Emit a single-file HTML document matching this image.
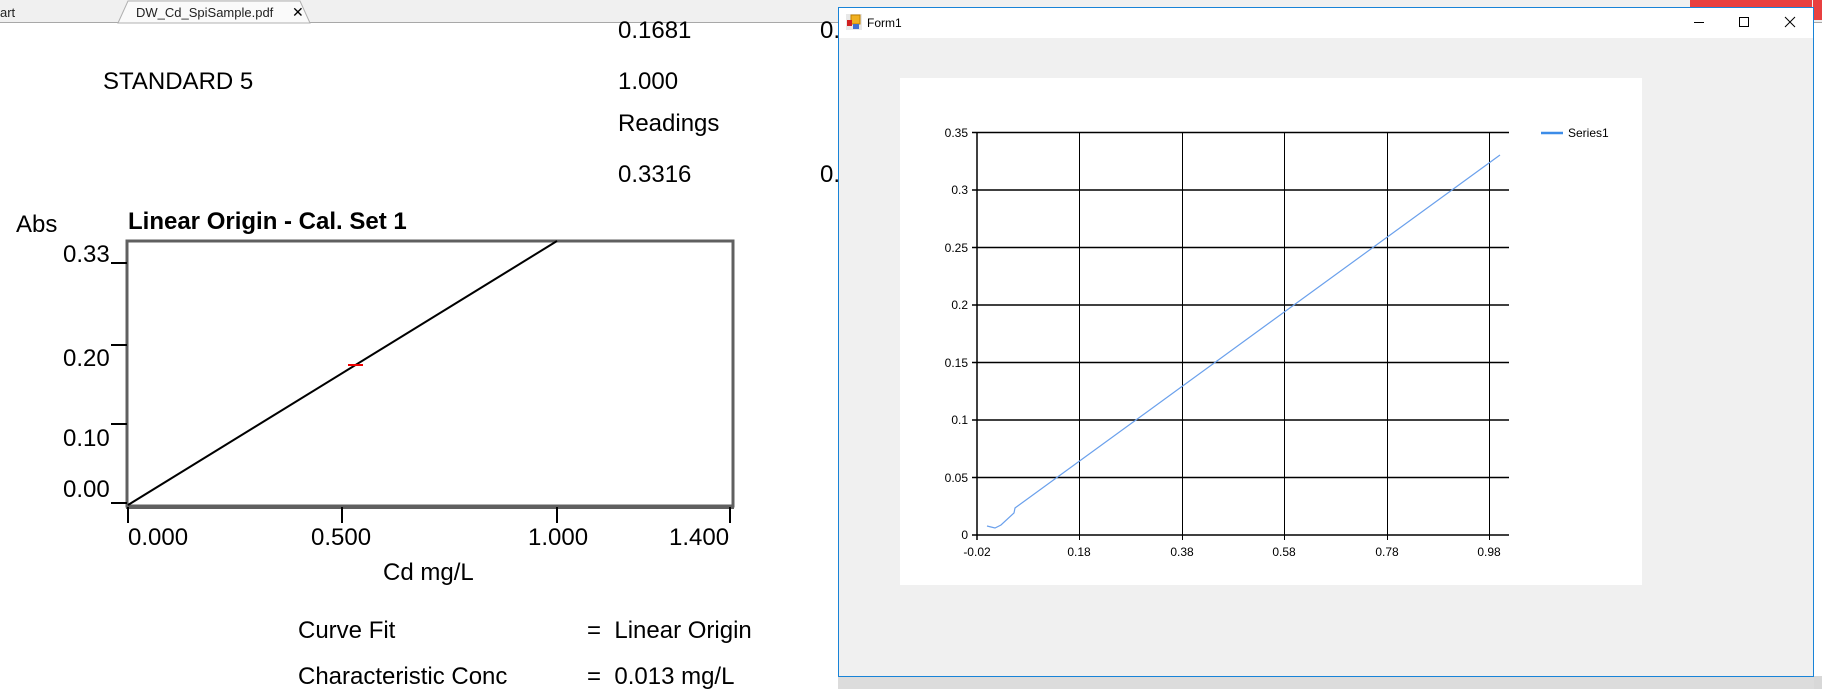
<!DOCTYPE html>
<html><head><meta charset="utf-8"><style>
html,body{margin:0;padding:0;width:1822px;height:689px;overflow:hidden;background:#fff;font-family:"Liberation Sans",sans-serif;}
.a{position:absolute;white-space:nowrap;line-height:1;}
.p{font-size:24px;color:#000;}
</style></head><body>
<!-- tab bar -->
<div class="a" style="left:0;top:0;width:1822px;height:22px;background:#f0f0f0;border-bottom:1px solid #a8a8a8;"></div>
<svg class="a" style="left:0;top:0" width="340" height="24"><polygon points="118,23 128,1 300,1 310,23" fill="#fafafa" stroke="#b0b0b0"/></svg>
<div class="a" style="left:0;top:6px;font-size:13px;color:#222;">art</div>
<div class="a" style="left:136px;top:6px;font-size:13px;color:#222;">DW_Cd_SpiSample.pdf</div>
<div class="a" style="left:292px;top:5px;font-size:14px;color:#000;">✕</div>

<!-- pdf text -->
<div class="a p" style="left:618px;top:19px;">0.1681</div>
<div class="a p" style="left:820px;top:19px;">0.</div>
<div class="a p" style="left:103px;top:70px;">STANDARD 5</div>
<div class="a p" style="left:618px;top:70px;">1.000</div>
<div class="a p" style="left:618px;top:112px;">Readings</div>
<div class="a p" style="left:618px;top:163px;">0.3316</div>
<div class="a p" style="left:820px;top:163px;">0.</div>
<div class="a p" style="left:16px;top:213px;">Abs</div>
<div class="a p" style="left:128px;top:210px;font-weight:bold;">Linear Origin - Cal. Set 1</div>

<svg class="a" style="left:0;top:0" width="840" height="689">
<rect x="127" y="241" width="606" height="265" fill="none" stroke="#606060" stroke-width="3"/>
<line x1="126" y1="507" x2="734" y2="507" stroke="#606060" stroke-width="4"/>
<g stroke="#000" stroke-width="2">
<line x1="111" y1="263" x2="127" y2="263"/><line x1="111" y1="345" x2="127" y2="345"/>
<line x1="111" y1="424" x2="127" y2="424"/><line x1="111" y1="503" x2="127" y2="503"/>
<line x1="128" y1="507" x2="128" y2="523"/><line x1="342" y1="507" x2="342" y2="523"/>
<line x1="557" y1="507" x2="557" y2="523"/><line x1="730" y1="507" x2="730" y2="523"/>
</g>
<line x1="128" y1="505" x2="557" y2="241" stroke="#000" stroke-width="2"/>
<line x1="348" y1="365" x2="363" y2="365" stroke="#e00" stroke-width="2"/>
</svg>
<div class="a p" style="left:63px;top:243px;">0.33</div>
<div class="a p" style="left:63px;top:347px;">0.20</div>
<div class="a p" style="left:63px;top:427px;">0.10</div>
<div class="a p" style="left:63px;top:478px;">0.00</div>
<div class="a p" style="left:128px;top:526px;">0.000</div>
<div class="a p" style="left:311px;top:526px;">0.500</div>
<div class="a p" style="left:528px;top:526px;">1.000</div>
<div class="a p" style="left:669px;top:526px;">1.400</div>
<div class="a p" style="left:383px;top:561px;">Cd mg/L</div>
<div class="a p" style="left:298px;top:619px;">Curve Fit</div>
<div class="a p" style="left:587px;top:619px;">=&nbsp; Linear Origin</div>
<div class="a p" style="left:298px;top:665px;">Characteristic Conc</div>
<div class="a p" style="left:587px;top:665px;">=&nbsp; 0.013 mg/L</div>

<!-- red button top right -->
<div class="a" style="left:1690px;top:0;width:122px;height:7px;background:#e84040;"></div>
<div class="a" style="left:1813px;top:0;width:9px;height:20px;background:#e84040;"></div>
<div class="a" style="left:1660px;top:676px;width:162px;height:13px;background:#d8d8d8;"></div>
<div class="a" style="left:838px;top:677px;width:976px;height:12px;background:#dcdcdc;"></div>

<!-- form window -->
<div class="a" style="left:838px;top:7px;width:974px;height:668px;background:#f0f0f0;border:1px solid #1883d7;"></div>
<div class="a" style="left:839px;top:8px;width:974px;height:30px;background:#fff;"></div>
<svg class="a" style="left:846px;top:14px" width="16" height="16"><rect x="0" y="0" width="16" height="16" fill="#e8e8e8"/><rect x="5" y="1" width="9" height="9" fill="#f0b020" stroke="#c08000"/><rect x="1" y="6" width="5" height="6" fill="#d02020"/><rect x="7" y="10" width="6" height="5" fill="#4070d0"/></svg>
<div class="a" style="left:867px;top:17px;font-size:12px;color:#000;">Form1</div>
<svg class="a" style="left:1690px;top:12px" width="110" height="20">
<line x1="4" y1="10.5" x2="14" y2="10.5" stroke="#000"/>
<rect x="49.5" y="5.5" width="9" height="9" fill="none" stroke="#000"/>
<path d="M95 5 L105 15 M105 5 L95 15" stroke="#000"/>
</svg>

<div class="a" style="left:900px;top:78px;width:742px;height:507px;background:#fff;"></div>
<svg class="a" style="left:0;top:0" width="1822" height="689">
<g stroke="#000" stroke-width="1">
<line x1="1079.5" y1="132" x2="1079.5" y2="540"/><line x1="1182.5" y1="132" x2="1182.5" y2="540"/>
<line x1="1284.5" y1="132" x2="1284.5" y2="540"/><line x1="1387.5" y1="132" x2="1387.5" y2="540"/>
<line x1="1489.5" y1="132" x2="1489.5" y2="540"/>
</g>
<g stroke="#000" stroke-width="1.5">
<line x1="972" y1="132.5" x2="1509" y2="132.5"/><line x1="972" y1="190" x2="1509" y2="190"/>
<line x1="972" y1="247.5" x2="1509" y2="247.5"/><line x1="972" y1="305" x2="1509" y2="305"/>
<line x1="972" y1="362.5" x2="1509" y2="362.5"/><line x1="972" y1="420" x2="1509" y2="420"/>
<line x1="972" y1="477.5" x2="1509" y2="477.5"/><line x1="972" y1="535" x2="1509" y2="535"/>
<line x1="977" y1="132" x2="977" y2="540"/>
</g>
<polyline points="987,526 995,528 1001,525 1014,513 1015,508 1500,155" fill="none" stroke="#6aa0ec" stroke-width="1.2"/>
<line x1="1541" y1="133" x2="1563" y2="133" stroke="#3c8ce8" stroke-width="2.5"/>
<g font-family="Liberation Sans, sans-serif" font-size="12" fill="#000">
<text x="1568" y="137">Series1</text>
<g text-anchor="end">
<text x="968" y="137">0.35</text><text x="968" y="194">0.3</text><text x="968" y="252">0.25</text>
<text x="968" y="309">0.2</text><text x="968" y="367">0.15</text><text x="968" y="424">0.1</text>
<text x="968" y="482">0.05</text><text x="968" y="539">0</text>
</g>
<g text-anchor="middle">
<text x="977" y="556">-0.02</text><text x="1079" y="556">0.18</text><text x="1182" y="556">0.38</text>
<text x="1284" y="556">0.58</text><text x="1387" y="556">0.78</text><text x="1489" y="556">0.98</text>
</g>
</g>
</svg>
</body></html>
